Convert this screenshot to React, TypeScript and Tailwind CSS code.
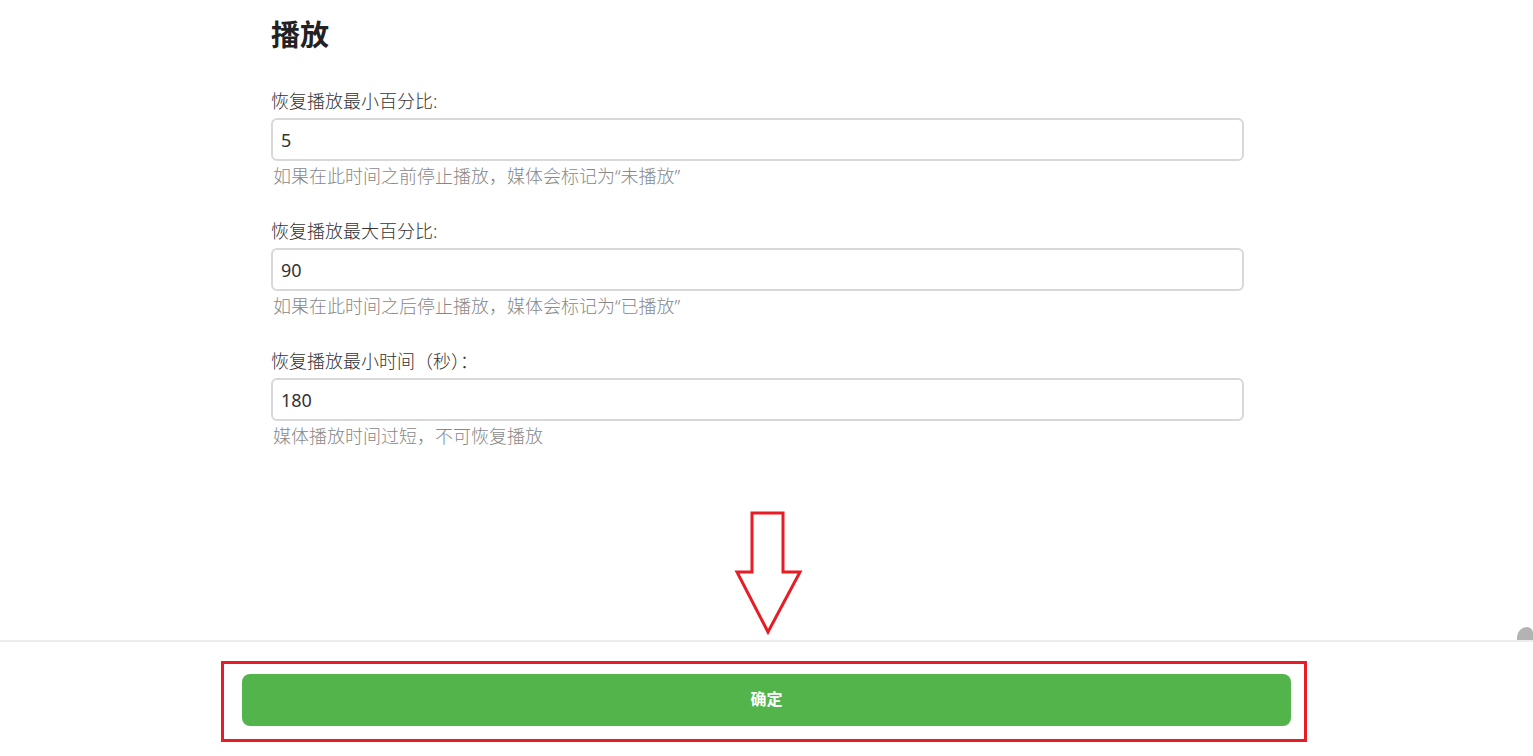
import React from 'react';

const fields = [
  { label: '恢复播放最小百分比:', value: '5', help: '如果在此时间之前停止播放，媒体会标记为“未播放”' },
  { label: '恢复播放最大百分比:', value: '90', help: '如果在此时间之后停止播放，媒体会标记为“已播放”' },
  { label: '恢复播放最小时间（秒）：', value: '180', help: '媒体播放时间过短，不可恢复播放' },
];

const font = { fontFamily: '"Noto Sans", "Noto Sans CJK SC", sans-serif' };

export default function App() {
  return (
    <div
      className="relative h-[756px] w-full flex flex-col overflow-hidden bg-white"
      style={font}
    >
      {/* Scrollable settings area */}
      <div className="flex-1 flex min-h-0">
        <div className="flex-1">
          <div className="w-[973px] ml-[271px] pt-[16px]">
            <h2 className="text-[29px] leading-[38px] font-bold text-[#222] mb-[34px]">播放</h2>

            {fields.map((f) => (
              <div key={f.label} className="mb-[29px]">
                <label className="block text-[18px] leading-[26px] font-light text-[#333]">{f.label}</label>
                <input
                  readOnly
                  value={f.value}
                  className="mt-1 block w-full h-[43px] px-2 border-2 border-[#d8d8d8] rounded-md text-[18px] text-[#333] outline-none"
                />
                <div className="mt-[2px] pl-[2px] text-[18px] leading-[26px] font-light text-[#888]">{f.help}</div>
              </div>
            ))}
          </div>
        </div>
        <div className="w-4 flex flex-col justify-end">
          <div className="h-[13px] bg-[#b3b3b3] rounded-tl-[10px] rounded-tr-[6px]" />
        </div>
      </div>

      {/* Footer */}
      <div className="h-[116px] shrink-0 border-t-2 border-[#ececec] px-[242px] pt-[32px]">
        <button className="w-full h-[52px] rounded-lg bg-[#53b44c] text-white text-[16px] leading-[20px] font-bold pb-[3px]">
          确定
        </button>
      </div>

      {/* Annotation overlays */}
      <div className="absolute left-[221px] top-[661px] w-[1086px] h-[81px] border-[3px] border-[#e81c24] pointer-events-none" />
      <svg
        className="absolute left-[730px] top-[505px] pointer-events-none"
        width="80"
        height="135"
        viewBox="730 505 80 135"
      >
        <polygon
          points="752,513 783,513 783,572 800,572 768,632 737,572 752,572"
          fill="white"
          stroke="#e81c24"
          strokeWidth="3"
        />
      </svg>
    </div>
  );
}
